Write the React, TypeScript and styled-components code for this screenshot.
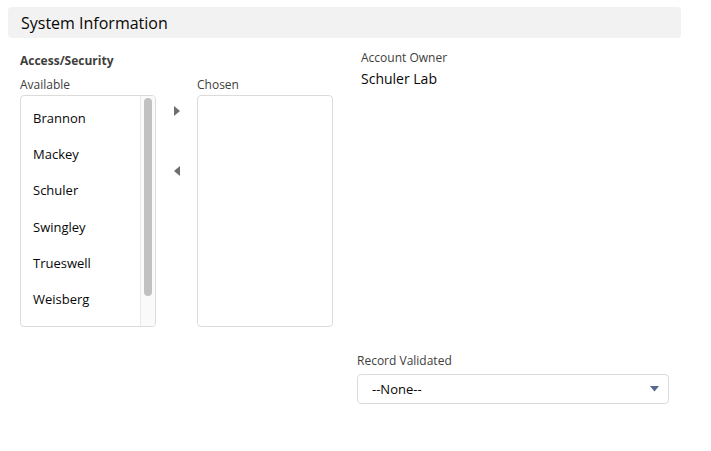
import React from "react";
import styled, { createGlobalStyle } from "styled-components";

const GlobalStyle = createGlobalStyle`
  html, body {
    margin: 0;
    padding: 0;
    background: #ffffff;
    font-family: "Open Sans", "Liberation Sans", sans-serif;
    color: #080707;
  }
`;

const Page = styled.div`
  padding: 7px 30px 0 8px;
  width: 673px;
`;

const SectionHeader = styled.h3`
  margin: 0;
  height: 31px;
  display: flex;
  align-items: center;
  padding: 0 13px;
  background: #f3f2f2;
  border-radius: 4px;
  font-size: 16px;
  font-weight: 400;
  color: #080707;
`;

const Body = styled.div`
  display: grid;
  grid-template-columns: 337px 312px;
  padding: 0 0 0 12px;
`;

const Column = styled.div`
  display: flex;
  flex-direction: column;
`;

const GroupLabel = styled.div`
  margin-top: 15px;
  font-size: 12px;
  font-weight: 700;
  color: #3e3e3c;
  line-height: 16px;
`;

const DualList = styled.div`
  display: flex;
  margin-top: 8px;
`;

const ListColumn = styled.div`
  display: flex;
  flex-direction: column;
`;

const Label = styled.div`
  font-size: 12px;
  color: #3e3e3c;
  line-height: 16px;
`;

const ListBox = styled.div`
  margin-top: 2px;
  width: 134px;
  height: 230px;
  border: 1px solid #dddbda;
  border-radius: 4px;
  display: flex;
  overflow: hidden;
`;

const Options = styled.ul`
  list-style: none;
  margin: 0;
  padding: 4px 0 0 0;
  flex: 1;
`;

const Option = styled.li`
  height: 36.2px;
  display: flex;
  align-items: center;
  padding-left: 12px;
  font-size: 13px;
  color: #080707;
`;

const Track = styled.div`
  width: 15px;
  box-sizing: border-box;
  background: #fafafa;
  border-left: 1px solid #e8e8e8;
  padding: 2px 3px 0 3px;
`;

const Thumb = styled.div`
  height: 198px;
  background: #c1c1c1;
  border-radius: 4px;
`;

const Arrows = styled.div`
  width: 41px;
  display: flex;
  flex-direction: column;
  align-items: center;
  padding-top: 29px;
  gap: 50px;
`;

const ArrowButton = styled.button`
  border: none;
  background: none;
  padding: 0;
  width: 10px;
  height: 10px;
  display: flex;
  align-items: center;
  justify-content: center;
  cursor: pointer;
`;

const OwnerLabel = styled(Label)`
  margin-top: 12px;
  padding-left: 4px;
`;

const OwnerValue = styled.div`
  margin-top: 4px;
  padding-left: 4px;
  font-size: 14px;
  color: #080707;
  line-height: 18px;
`;

const SelectField = styled.div`
  margin-top: 265px;
  display: flex;
  flex-direction: column;
`;

const Select = styled.div`
  margin-top: 5px;
  height: 30px;
  box-sizing: border-box;
  border: 1px solid #dddbda;
  border-radius: 4px;
  display: flex;
  align-items: center;
  justify-content: space-between;
  padding: 0 9px 0 14px;
  font-size: 13px;
  color: #080707;
`;

const Caret = () => (
  <svg width="9" height="6" viewBox="0 0 9 6">
    <path d="M0 0 H9 L4.5 5.5 Z" fill="#54698d" />
  </svg>
);

const names = ["Brannon", "Mackey", "Schuler", "Swingley", "Trueswell", "Weisberg"];

export default function App() {
  return (
    <Page>
      <GlobalStyle />
      <SectionHeader>System Information</SectionHeader>
      <Body>
        <Column>
          <GroupLabel>Access/Security</GroupLabel>
          <DualList>
            <ListColumn>
              <Label>Available</Label>
              <ListBox>
                <Options>
                  {names.map((n) => (
                    <Option key={n}>{n}</Option>
                  ))}
                </Options>
                <Track>
                  <Thumb />
                </Track>
              </ListBox>
            </ListColumn>
            <Arrows>
              <ArrowButton aria-label="Move selection to Chosen">
                <svg width="6" height="10" viewBox="0 0 6 10">
                  <path d="M0 0 L6 5 L0 10 Z" fill="#706e6b" />
                </svg>
              </ArrowButton>
              <ArrowButton aria-label="Move selection to Available">
                <svg width="6" height="10" viewBox="0 0 6 10">
                  <path d="M6 0 L0 5 L6 10 Z" fill="#706e6b" />
                </svg>
              </ArrowButton>
            </Arrows>
            <ListColumn>
              <Label>Chosen</Label>
              <ListBox />
            </ListColumn>
          </DualList>
        </Column>
        <Column>
          <OwnerLabel>Account Owner</OwnerLabel>
          <OwnerValue>Schuler Lab</OwnerValue>
          <SelectField>
            <Label>Record Validated</Label>
            <Select>
              <span>--None--</span>
              <Caret />
            </Select>
          </SelectField>
        </Column>
      </Body>
    </Page>
  );
}
